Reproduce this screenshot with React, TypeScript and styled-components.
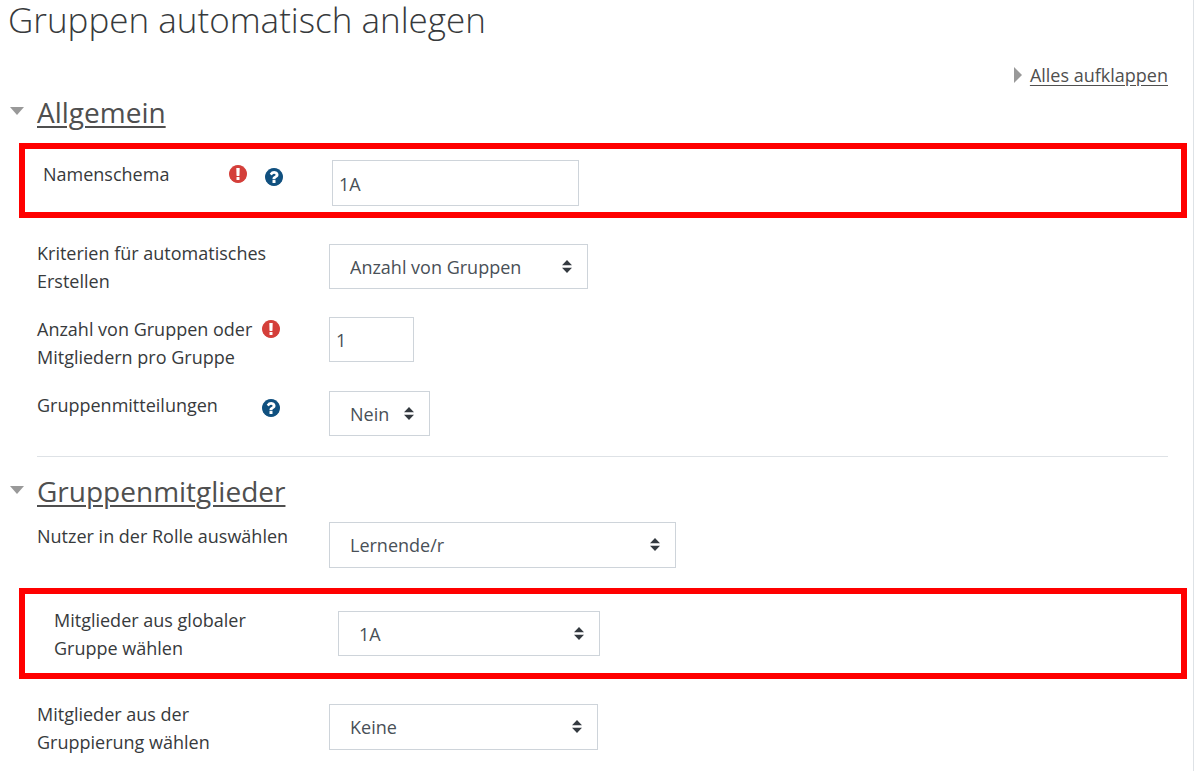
import React from "react";
import styled, { createGlobalStyle } from "styled-components";

const GlobalStyle = createGlobalStyle`
  * { box-sizing: border-box; }
  body {
    margin: 0;
    background: #fff;
    color: #373a3c;
    font-family: "Open Sans", "Noto Sans", sans-serif;
    font-size: 18px;
    line-height: 28px;
  }
`;

const Page = styled.main`
  min-height: 100vh;
  padding: 0 25px 16px 8px;
  border-right: 1px solid #dee2e6;
`;

const Title = styled.h1`
  margin: 0;
  font-size: 35px;
  font-weight: 300;
  line-height: 40px;
`;

const ExpandBar = styled.div`
  display: flex;
  justify-content: flex-end;
  margin: 21px 0 6px;
`;

const ExpandLink = styled.a`
  display: flex;
  align-items: center;
  gap: 8px;
  color: #4f4f4f;
  text-underline-offset: 3px;
`;

const SectionHeading = styled.h2`
  margin: 0 0 14px;
  font-size: 28px;
  font-weight: 400;
  line-height: 34px;
`;

const SectionLink = styled.a`
  display: flex;
  gap: 13px;
  padding-left: 2px;
  color: #4f4f4f;
  text-decoration-thickness: 2px;
  text-underline-offset: 3px;

  svg {
    margin-top: 12px;
  }
`;

const Rows = styled.div`
  display: flex;
  flex-direction: column;
  gap: 20px;
  padding-left: 29px;
`;

const Divider = styled.hr`
  margin: 20px 0 17px 29px;
  border: 0;
  border-top: 1px solid #dee2e6;
`;

const Highlight = styled.div<{ $inset: number; $top: number; $bottom: number }>`
  margin: 0 -19px 1px -18px;
  padding: ${(p) => `${p.$top}px 18px ${p.$bottom}px ${p.$inset}px`};
  border: 6px solid #f00;
`;

const Row = styled.div<{ $labelWidth: number }>`
  display: grid;
  grid-template-columns: ${(p) => p.$labelWidth}px minmax(0, 1fr);
  align-items: start;
`;

const LabelCell = styled.div`
  display: flex;
  justify-content: space-between;
  padding-right: 32px;
`;

const Icons = styled.div`
  display: flex;
  gap: 18px;
  margin-right: 17px;
`;

const RequiredMark = styled.span`
  display: flex;
  height: 28px;
  align-items: center;
  color: #d43f3a;
`;

const HelpButton = styled.button`
  display: flex;
  height: 34px;
  align-items: center;
  padding: 0;
  border: 0;
  background: none;
  color: #10507f;
  cursor: pointer;
`;

const Control = styled.div<{ $drop: number; $width: number; $tall?: boolean }>`
  position: relative;
  width: ${(p) => p.$width}px;
  max-width: 100%;
  height: ${(p) => (p.$tall ? 46 : 45)}px;
  margin-top: ${(p) => p.$drop}px;
`;

const TextInput = styled.input`
  width: 100%;
  height: 100%;
  padding: 1px 6px 0;
  border: 1px solid #ced4da;
  border-radius: 0;
  color: #495057;
  font: inherit;
`;

const Select = styled.select`
  appearance: none;
  width: 100%;
  height: 100%;
  padding: 0 28px 0 20px;
  border: 1px solid #ced4da;
  border-radius: 0;
  background: #fff;
  color: #495057;
  font: inherit;
`;

const Arrows = styled.svg`
  position: absolute;
  top: 16px;
  right: 16px;
  pointer-events: none;
`;

const CIRCLE =
  "M1664 896q0 209-103 385.500T1281.500 1561 896 1664t-385.500-103T231 1281.500 128 896t103-385.500T510.500 231 896 128t385.500 103T1561 510.500 1664 896z";
const EXCLAMATION =
  "M1024 1375v-190q0-14-9-23.500t-22-9.500H801q-13 0-23 10t-10 23v190q0 13 10 23t23 10h192q13 0 22-9.500t9-23.500zm-2-344l18-621q0-12-10-18-10-8-24-8H786q-14 0-24 8-10 6-10 18l17 621q0 10 10 17.500t24 7.500h185q14 0 23.500-7.500t10.500-17.500z";
const QUESTION =
  "M1024 1376v-192q0-14-9-23t-23-9H800q-14 0-23 9t-9 23v192q0 14 9 23t23 9h192q14 0 23-9t9-23zm256-672q0-88-55.500-163T1086 425t-170-41q-243 0-371 213-15 24 8 42l132 100q7 6 19 6 16 0 25-12 53-68 86-92 34-24 86-24 48 0 85.500 26t37.500 59q0 38-20 61t-68 45q-63 28-115.500 86.500T768 1020v36q0 14 9 23t23 9h192q14 0 23-9t9-23q0-19 21.500-49.500T1100 957q32-18 49-28.500t46-35 44.500-48 28-60.500 12.500-81z";

function CircleIcon({ mark }: { mark: string }) {
  return (
    <svg width="18" height="18" viewBox="128 128 1536 1536" aria-hidden="true">
      <path d={CIRCLE} fill="currentColor" />
      <path d={mark} fill="#fff" />
    </svg>
  );
}

type FieldProps = {
  id: string;
  label: string;
  width: number;
  drop?: number;
  tall?: boolean;
  labelWidth?: number;
  required?: boolean;
  help?: boolean;
  value: string;
  kind: "text" | "select";
};

function Field(props: FieldProps) {
  const { id, label, width, drop = 0, tall, labelWidth = 292, required, help, value, kind } = props;
  return (
    <Row $labelWidth={labelWidth}>
      <LabelCell>
        <label htmlFor={id}>{label}</label>
        {(required || help) && (
          <Icons>
            {required && (
              <RequiredMark>
                <CircleIcon mark={EXCLAMATION} />
              </RequiredMark>
            )}
            {help && (
              <HelpButton type="button" aria-label={`Hilfe zu ${label}`}>
                <CircleIcon mark={QUESTION} />
              </HelpButton>
            )}
          </Icons>
        )}
      </LabelCell>
      <Control $drop={drop} $width={width} $tall={tall}>
        {kind === "text" ? (
          <TextInput id={id} type="text" defaultValue={value} />
        ) : (
          <>
            <Select id={id} defaultValue={value}>
              <option>{value}</option>
            </Select>
            <Arrows width="10" height="13" viewBox="0 0 10 13" aria-hidden="true">
              <path d="M5 0L0 5.200h10zM5 13L0 7.800h10z" fill="#343a40" />
            </Arrows>
          </>
        )}
      </Control>
    </Row>
  );
}

function Heading({ children }: { children: string }) {
  return (
    <SectionHeading>
      <SectionLink href="#">
        <svg width="14" height="8" viewBox="0 0 14 8" aria-hidden="true">
          <path d="M0 0h14L7 8z" fill="#999" />
        </svg>
        {children}
      </SectionLink>
    </SectionHeading>
  );
}

export default function App() {
  return (
    <>
      <GlobalStyle />
      <Page>
        <Title>Gruppen automatisch anlegen</Title>
        <form>
          <ExpandBar>
            <ExpandLink href="#">
              <svg width="8" height="16" viewBox="0 0 8 16" aria-hidden="true">
                <path d="M0 0l8 8-8 8z" fill="#999" />
              </svg>
              Alles aufklappen
            </ExpandLink>
          </ExpandBar>

          <section>
            <Heading>Allgemein</Heading>
            <Rows>
              <Highlight $inset={18} $top={11} $bottom={6}>
                <Field id="name" kind="text" label="Namenschema" value="1A" width={247} tall labelWidth={289} required help />
              </Highlight>
              <Field id="criteria" kind="select" label="Kriterien für automatisches Erstellen" value="Anzahl von Gruppen" width={259} drop={5} />
              <Field id="count" kind="text" label="Anzahl von Gruppen oder Mitgliedern pro Gruppe" value="1" width={85} drop={2} required />
              <Field id="messages" kind="select" label="Gruppenmitteilungen" value="Nein" width={101} help />
            </Rows>
          </section>

          <Divider />

          <section>
            <Heading>Gruppenmitglieder</Heading>
            <Rows>
              <Field id="role" kind="select" label="Nutzer in der Rolle auswählen" value="Lernende/r" width={347} tall />
              <Highlight $inset={29} $top={12} $bottom={11}>
                <Field id="cohort" kind="select" label="Mitglieder aus globaler Gruppe wählen" value="1A" width={262} drop={5} labelWidth={284} />
              </Highlight>
              <Field id="grouping" kind="select" label="Mitglieder aus der Gruppierung wählen" value="Keine" width={269} drop={4} tall />
            </Rows>
          </section>
        </form>
      </Page>
    </>
  );
}
